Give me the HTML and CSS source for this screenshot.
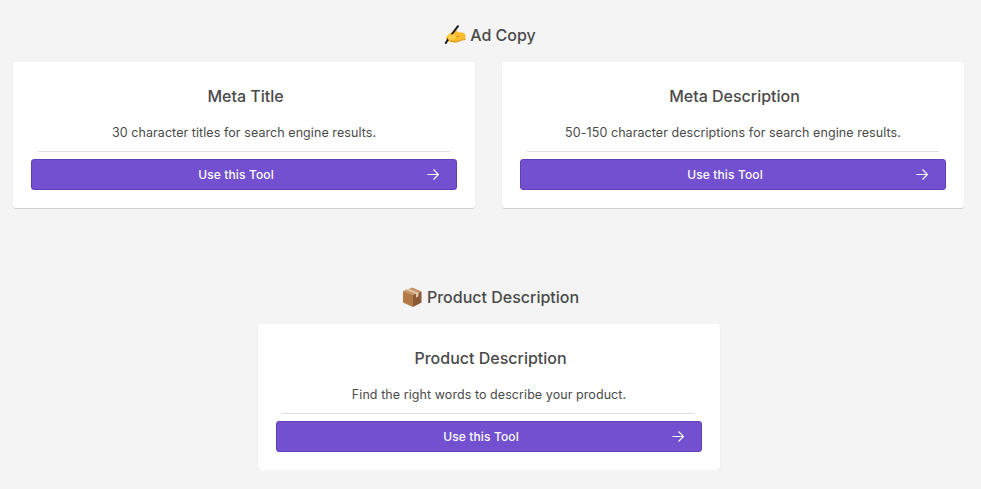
FILE: index.html
```html
<!DOCTYPE html>
<html lang="en">
<head>
<meta charset="utf-8">
<title>Tools</title>
<link rel="stylesheet" href="styles.css">
</head>
<body>
<section class="group">
  <h2 class="group-title"><svg class="emoji" viewBox="0 0 22 20"><path d="M2 13q2-4 6-6l4-2q2 .500 1 2l5 .500q3.500 1 3.500 3v4l-4 .500q-4 3-8 2.500l-5-1q-3-.500-2.500-3.500z" fill="#fbbd2e"/><path d="M6 16q6 2.500 12-1l3.500-.500M11 11.500h4" fill="none" stroke="#dc9222"/><path d="M14 1.200L8 9M5 13L1.800 18" stroke="#1c1c1c" stroke-width="2" stroke-linecap="round"/><path d="M3.500 12.500q3-4 6-3l3 2-3 3-5 .500z" fill="#ffce4a"/></svg><span>Ad Copy</span></h2>
  <div class="cards">
    <article class="card"><h3>Meta Title</h3><p>30 character titles for search engine results.</p><hr><a class="button"><span>Use this Tool</span><svg class="arrow" viewBox="0 0 12 12"><path d="M.5 5.500h11M6.500.500l5 5-5 5"/></svg></a></article>
    <article class="card"><h3>Meta Description</h3><p>50-150 character descriptions for search engine results.</p><hr><a class="button"><span>Use this Tool</span><svg class="arrow" viewBox="0 0 12 12"><path d="M.5 5.500h11M6.500.500l5 5-5 5"/></svg></a></article>
  </div>
</section>
<section class="group">
  <h2 class="group-title"><svg class="emoji" viewBox="0 0 22 20"><path d="M2 4L11.500.500 20.500 4.500 12 8z" fill="#c69263"/><path d="M2 4l10 4v12L2 15.500z" fill="#b27a46"/><path d="M20.500 4.500L12 8v12l8.500-4.500z" fill="#8c5a35"/><path d="M5 2.900L8 1.800l9.500 4v3.700l-2.500 1V7z" fill="#dfc6a8"/></svg><span>Product Description</span></h2>
  <div class="cards cards-single">
    <article class="card"><h3>Product Description</h3><p>Find the right words to describe your product.</p><hr><a class="button"><span>Use this Tool</span><svg class="arrow" viewBox="0 0 12 12"><path d="M.5 5.500h11M6.500.500l5 5-5 5"/></svg></a></article>
  </div>
</section>
</body>
</html>
```
FILE: styles.css
```css
* { box-sizing: border-box; }
body { margin: 0; padding: 22px 17px 0 13px; background: #f4f4f4; color: #4a4a4a; font-family: Inter, sans-serif; }
.group + .group { margin-top: 76px; }
h2, h3 { margin: 0; font-size: 16px; font-weight: 500; line-height: 24px; text-align: center; }
h3 { padding-left: 3px; }
.group-title { display: flex; justify-content: center; align-items: center; gap: 4px; height: 26px; margin-bottom: 14px; padding-left: 3px; }
.emoji { width: 22px; height: 20px; }
.cards { display: flex; justify-content: center; gap: 27px; }
.cards-single { padding-left: 1px; }
.card { width: 462px; height: 146px; padding: 22px 18px 18px; background: #fff; border-radius: 3px; box-shadow: 0 1px 1px rgba(0,0,0,.17); text-align: center; }
p { margin: 15px 0 0; font-size: 12.5px; line-height: 20px; letter-spacing: .07px; }
hr { height: 1px; margin: 8px 7px 7px; border: 0; background: #dfdfdf; }
.cards-single hr { margin-left: 6px; margin-right: 8px; }
.button { display: grid; grid-template-columns: 1fr 12px; align-items: center; height: 31px; padding: 0 17px 0 13px; background: #7250d0; border: 1px solid #5f40b8; border-radius: 3px; color: #fff; font-size: 12px; line-height: 15px; letter-spacing: .13px; font-weight: 500; }
.arrow { width: 12px; height: 12px; fill: none; stroke: #fff; stroke-width: 1.2; }
```
